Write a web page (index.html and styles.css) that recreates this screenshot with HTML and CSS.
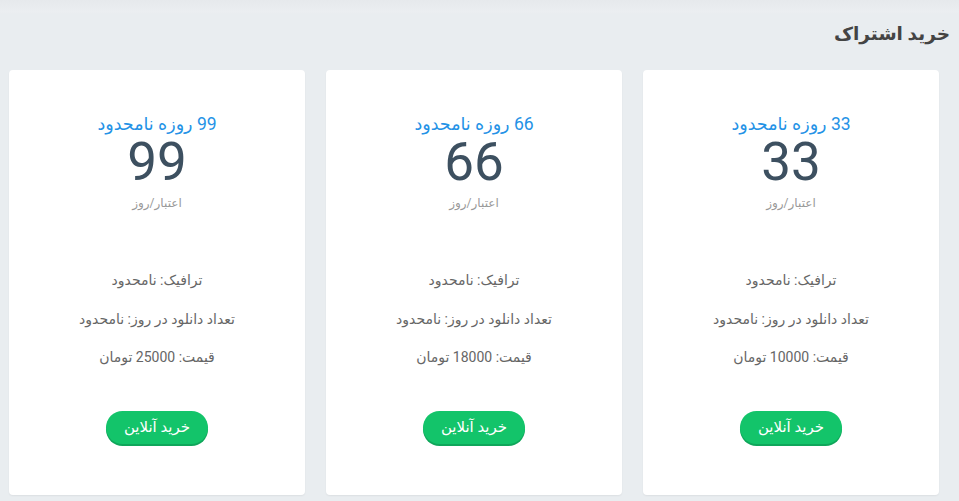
FILE: index.html
```html
<!DOCTYPE html>
<html lang="fa" dir="rtl">
<head>
<meta charset="utf-8">
<title>خرید اشتراک</title>
<link rel="stylesheet" href="styles.css">
</head>
<body>
<div class="page">
  <h1 class="page-title">خرید اشتراک</h1>
  <div class="plans">
    <div class="plan">
      <div class="plan-name">33 روزه نامحدود</div>
      <div class="plan-num">33</div>
      <div class="plan-unit">اعتبار/روز</div>
      <ul class="plan-features">
        <li>ترافیک: نامحدود</li>
        <li>تعداد دانلود در روز: نامحدود</li>
        <li>قیمت: 10000 تومان</li>
      </ul>
      <a class="buy-btn" href="#">خرید آنلاین</a>
    </div>
    <div class="plan">
      <div class="plan-name">66 روزه نامحدود</div>
      <div class="plan-num">66</div>
      <div class="plan-unit">اعتبار/روز</div>
      <ul class="plan-features">
        <li>ترافیک: نامحدود</li>
        <li>تعداد دانلود در روز: نامحدود</li>
        <li>قیمت: 18000 تومان</li>
      </ul>
      <a class="buy-btn" href="#">خرید آنلاین</a>
    </div>
    <div class="plan">
      <div class="plan-name">99 روزه نامحدود</div>
      <div class="plan-num">99</div>
      <div class="plan-unit">اعتبار/روز</div>
      <ul class="plan-features">
        <li>ترافیک: نامحدود</li>
        <li>تعداد دانلود در روز: نامحدود</li>
        <li>قیمت: 25000 تومان</li>
      </ul>
      <a class="buy-btn" href="#">خرید آنلاین</a>
    </div>
  </div>
</div>
</body>
</html>
```
FILE: styles.css
```css
html, body {
  margin: 0;
  padding: 0;
}
body {
  background: #e9edf0;
  font-family: Roboto, "DejaVu Sans", sans-serif;
  color: #555;
  height: 501px;
  overflow: hidden;
}
.page {
  background: linear-gradient(#e6e9ec 0, #ebeef1 12px, #e9edf0 14px);
  padding: 22px 20px 0 11px;
  height: 100%;
  box-sizing: border-box;
}
.page-title {
  margin: 0 -11px 0 0;
  font-size: 18.5px;
  font-weight: bold;
  color: #444;
  line-height: 24px;
}
.plans {
  margin-top: 24px;
  display: grid;
  grid-template-columns: repeat(3, 296px);
  column-gap: 21px;
}
.plan {
  background: #fff;
  border-radius: 4px;
  height: 425px;
  box-shadow: 0 1px 2px rgba(0,0,0,0.06);
  display: flex;
  flex-direction: column;
  align-items: center;
  padding-top: 44px;
  box-sizing: border-box;
}
.plan-name {
  color: #2492e6;
  font-size: 17.5px;
  line-height: 20px;
}
.plan-num {
  color: #3d5060;
  font-size: 53px;
  line-height: 56px;
}
.plan-unit {
  color: #999;
  font-size: 12px;
  line-height: 16px;
  margin-top: 5px;
}
.plan-features {
  list-style: none;
  margin: 59px 0 0;
  padding: 0;
  text-align: center;
  font-size: 14px;
  color: #666;
}
.plan-features li {
  line-height: 20px;
  margin-bottom: 19px;
}
.plan-features li:nth-child(2) {
  margin-bottom: 18px;
}
.buy-btn {
  margin-top: 25px;
  display: inline-block;
  background: #13c46a;
  color: #fff;
  text-decoration: none;
  font-size: 15px;
  line-height: 33px;
  height: 33px;
  width: 102px;
  text-align: center;
  border-radius: 17px;
  box-shadow: 0 2px 0 #0fa65a;
}
```
